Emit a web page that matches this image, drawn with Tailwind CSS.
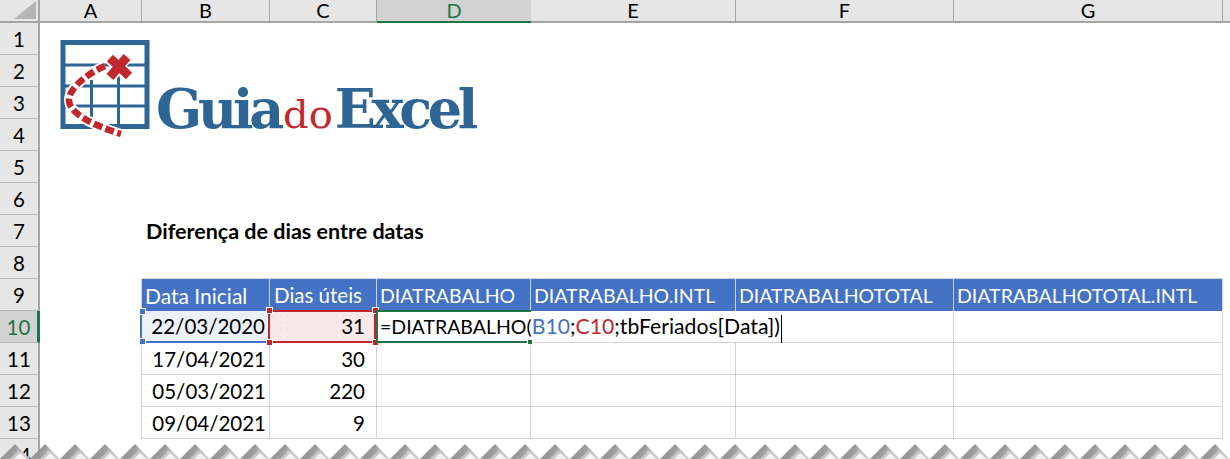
<!DOCTYPE html>
<html lang="pt">
<head>
  <meta charset="UTF-8">
  <meta name="viewport" content="width=device-width, initial-scale=1.0">
  <title>Guia do Excel</title>
  <script src="https://cdn.jsdelivr.net/npm/@tailwindcss/browser@4"></script>
</head>
<body class="bg-white h-[459px] overflow-hidden relative font-['Lato',sans-serif] text-[20.5px] text-black">

  <!-- Cabecalho das colunas -->
  <div class="flex h-[23px] text-center leading-[21px] text-[20px]">
    <div class="w-10 bg-[#e6e6e6] border-r-2 border-b-2 border-[#a6a6a6]">
      <svg class="w-[38px] h-[21px]" viewBox="0 0 38 21"><path d="M14 19 L36 1 L36 19 Z" fill="#b5b5b5"/></svg>
    </div>
    <div class="w-[102px] bg-[#e6e6e6] border-r border-b-2 border-[#a6a6a6]">A</div>
    <div class="w-[128px] bg-[#e6e6e6] border-r border-b-2 border-[#a6a6a6]">B</div>
    <div class="w-[107px] bg-[#e6e6e6] border-r border-b-2 border-[#a6a6a6]">C</div>
    <div class="w-[154px] bg-[#d2d2d2] border-b-2 border-[#217346] text-[#217346]">D</div>
    <div class="w-[205px] bg-[#e6e6e6] border-r border-b-2 border-[#a6a6a6]">E</div>
    <div class="w-[218px] bg-[#e6e6e6] border-r border-b-2 border-[#a6a6a6]">F</div>
    <div class="w-[269px] bg-[#e6e6e6] border-r border-b-2 border-[#a6a6a6]">G</div>
    <div class="flex-1 bg-[#e6e6e6] border-b-2 border-[#a6a6a6]"></div>
  </div>

  <!-- Linhas 1 a 8 -->
  <div class="flex h-8"><div class="w-10 h-8 leading-8 text-center bg-[#e6e6e6] border-r-2 border-b border-r-[#a6a6a6] border-b-[#b8b8b8]">1</div></div>
  <div class="flex h-8"><div class="w-10 h-8 leading-8 text-center bg-[#e6e6e6] border-r-2 border-b border-r-[#a6a6a6] border-b-[#b8b8b8]">2</div></div>
  <div class="flex h-8"><div class="w-10 h-8 leading-8 text-center bg-[#e6e6e6] border-r-2 border-b border-r-[#a6a6a6] border-b-[#b8b8b8]">3</div></div>
  <div class="flex h-8"><div class="w-10 h-8 leading-8 text-center bg-[#e6e6e6] border-r-2 border-b border-r-[#a6a6a6] border-b-[#b8b8b8]">4</div></div>
  <div class="flex h-8"><div class="w-10 h-8 leading-8 text-center bg-[#e6e6e6] border-r-2 border-b border-r-[#a6a6a6] border-b-[#b8b8b8]">5</div></div>
  <div class="flex h-8"><div class="w-10 h-8 leading-8 text-center bg-[#e6e6e6] border-r-2 border-b border-r-[#a6a6a6] border-b-[#b8b8b8]">6</div></div>
  <div class="flex h-8">
    <div class="w-10 h-8 leading-8 text-center bg-[#e6e6e6] border-r-2 border-b border-r-[#a6a6a6] border-b-[#b8b8b8]">7</div>
    <div class="ml-[106px] leading-8 font-bold text-[21.5px] whitespace-nowrap">Diferença de dias entre datas</div>
  </div>
  <div class="flex h-8"><div class="w-10 h-8 leading-8 text-center bg-[#e6e6e6] border-r-2 border-b border-r-[#a6a6a6] border-b-[#b8b8b8]">8</div></div>

  <!-- Linha 9: cabecalho da tabela -->
  <div class="flex h-8">
    <div class="w-10 h-8 leading-8 text-center bg-[#e6e6e6] border-r-2 border-b border-r-[#a6a6a6] border-b-[#b8b8b8]">9</div>
    <div class="w-[102px] -mt-px border-r border-[#d4d4d4]"></div>
    <div class="flex h-[33px] -mt-px bg-[#4472c4] text-white text-[19.5px] leading-[33px] border-t border-[#d4d4d4] whitespace-nowrap">
      <div class="w-[128px] pl-[3px] border-r border-white/70 text-[21px]">Data Inicial</div>
      <div class="w-[107px] pl-[4px] border-r border-white/70 text-[20.5px]">Dias úteis</div>
      <div class="w-[154px] pl-[3px] border-r border-white/70">DIATRABALHO</div>
      <div class="w-[205px] pl-[3px] border-r border-white/70">DIATRABALHO.INTL</div>
      <div class="w-[218px] pl-[3px] border-r border-white/70">DIATRABALHOTOTAL</div>
      <div class="w-[268px] pl-[3px]">DIATRABALHOTOTAL.INTL</div>
    </div>
    <div class="w-px h-[33px] -mt-px bg-[#d4d4d4]"></div>
  </div>

  <!-- Linha 10: celula em edicao -->
  <div class="flex h-8 relative">
    <div class="w-10 h-8 leading-8 text-center bg-[#d2d2d2] text-[#217346] border-r-[3px] border-b border-r-[#217346] border-b-[#b8b8b8]">10</div>
    <div class="w-[100px]"></div>
    <div class="w-[128px] relative bg-[#ecf0f9] border-b-2 border-l-2 border-[#4472c4] text-right pr-[3px] leading-[30px]">22/03/2020
      <span class="absolute left-[-3px] top-[-3px] w-[7px] h-[7px] bg-[#4472c4] border border-white"></span>
      <span class="absolute left-[-3px] bottom-[-4px] w-[7px] h-[7px] bg-[#4472c4] border border-white"></span>
    </div>
    <div class="w-[108px] h-[33px] -mt-px relative bg-[#f9e9e9] bg-[radial-gradient(#f2d4d4_0.7px,transparent_0.8px)] bg-[length:7px_7px] border-2 border-[#c0272d] text-right pr-[9px] leading-[29px]">31
      <span class="absolute left-[-4px] top-[-5px] w-[7px] h-[7px] bg-[#c0272d] border border-white"></span>
      <span class="absolute right-[-5px] top-[-5px] w-[7px] h-[7px] bg-[#c0272d] border border-white"></span>
      <span class="absolute left-[-4px] bottom-[-5px] w-[7px] h-[7px] bg-[#c0272d] border border-white"></span>
      <span class="absolute right-[-5px] bottom-[-5px] w-[7px] h-[7px] bg-[#c0272d] border border-white"></span>
    </div>
    <div class="w-[155px] h-[33px] -mt-px relative border-l-2 border-t-2 border-b-2 border-[#217346] pl-[2px] leading-[29px] whitespace-nowrap"><span class="text-[19.5px]">=DIATRABALHO(</span><span class="text-[#4472c4] text-[21.2px]">B10</span><span class="text-[21.2px]">;</span><span class="text-[#c0272d] text-[21.2px]">C10</span><span class="text-[21.2px]">;tbFeriados[Data])</span><span class="inline-block align-middle w-px h-7 bg-black ml-px"></span>
      <span class="absolute right-[-2px] bottom-[-4px] w-[6px] h-[6px] bg-[#217346] border border-white"></span>
    </div>
    <div class="w-[205px] border-b border-[#d4d4d4]"></div>
    <div class="w-[218px] border-r border-b border-[#d4d4d4]"></div>
    <div class="w-[269px] border-r border-b border-[#d4d4d4]"></div>
  </div>

  <!-- Linhas 11 a 13 -->
  <div class="flex h-8 leading-8">
    <div class="w-10 text-center bg-[#e6e6e6] border-r-2 border-b border-r-[#a6a6a6] border-b-[#b8b8b8]">11</div>
    <div class="w-[102px] border-r border-[#d4d4d4]"></div>
    <div class="w-[128px] border-r border-b border-[#d4d4d4] text-right pr-[3px]">17/04/2021</div>
    <div class="w-[107px] border-r border-b border-[#d4d4d4] text-right pr-[11px]">30</div>
    <div class="w-[154px] border-r border-b border-[#d4d4d4]"></div>
    <div class="w-[205px] border-r border-b border-[#d4d4d4]"></div>
    <div class="w-[218px] border-r border-b border-[#d4d4d4]"></div>
    <div class="w-[269px] border-r border-b border-[#d4d4d4]"></div>
  </div>
  <div class="flex h-8 leading-8">
    <div class="w-10 text-center bg-[#e6e6e6] border-r-2 border-b border-r-[#a6a6a6] border-b-[#b8b8b8]">12</div>
    <div class="w-[102px] border-r border-[#d4d4d4]"></div>
    <div class="w-[128px] border-r border-b border-[#d4d4d4] text-right pr-[3px]">05/03/2021</div>
    <div class="w-[107px] border-r border-b border-[#d4d4d4] text-right pr-[11px]">220</div>
    <div class="w-[154px] border-r border-b border-[#d4d4d4]"></div>
    <div class="w-[205px] border-r border-b border-[#d4d4d4]"></div>
    <div class="w-[218px] border-r border-b border-[#d4d4d4]"></div>
    <div class="w-[269px] border-r border-b border-[#d4d4d4]"></div>
  </div>
  <div class="flex h-8 leading-8">
    <div class="w-10 text-center bg-[#e6e6e6] border-r-2 border-b border-r-[#a6a6a6] border-b-[#b8b8b8]">13</div>
    <div class="w-[102px] border-r border-[#d4d4d4]"></div>
    <div class="w-[128px] border-r border-b border-[#d4d4d4] text-right pr-[3px]">09/04/2021</div>
    <div class="w-[107px] border-r border-b border-[#d4d4d4] text-right pr-[11px]">9</div>
    <div class="w-[154px] border-r border-b border-[#d4d4d4]"></div>
    <div class="w-[205px] border-r border-b border-[#d4d4d4]"></div>
    <div class="w-[218px] border-r border-b border-[#d4d4d4]"></div>
    <div class="w-[269px] border-r border-b border-[#d4d4d4]"></div>
  </div>
  <div class="flex h-8 leading-8">
    <div class="w-10 text-center bg-[#e6e6e6] border-r-2 border-r-[#a6a6a6]">14</div>
  </div>

  <!-- Logo -->
  <div class="absolute left-[50px] top-[30px] flex items-start">
    <svg class="w-[110px] h-[115px]" viewBox="0 0 110 115" fill="none">
      <rect x="13" y="12.5" width="84" height="84" stroke="#2f6595" stroke-width="5"/>
      <path d="M13 35H97M13 56H97M13 76H97" stroke="#2f6595" stroke-width="3"/>
      <path d="M41.5 50V96M68.5 36V96" stroke="#2f6595" stroke-width="3"/>
      <path d="M55 36C40 42 18 58 19 71C20 84 45 96 71 104" stroke="#fff" stroke-width="10"/>
      <path d="M59 27L78 46M76 27L60 47" stroke="#fff" stroke-width="13"/>
      <path d="M55 36C40 42 18 58 19 71C20 84 45 96 71 104" stroke="#c1272d" stroke-width="6.5" stroke-dasharray="9 3.5"/>
      <path d="M60 28L79 46M77 27L60 47" stroke="#c1272d" stroke-width="9"/>
    </svg>
  </div>
  <div class="absolute left-[156px] top-[74px] h-[70px] flex items-baseline whitespace-nowrap font-['DejaVu_Serif',serif] font-bold text-[#2f6595] leading-[70px] text-[54px]">
    <span class="tracking-[-4.2px]">Guia</span><span class="text-[#c1272d] font-normal text-[40px] ml-[3px] mr-[2px]">do</span><span class="tracking-[-4.4px]">Excel</span>
  </div>

  <!-- Borda rasgada -->
  <svg class="absolute left-0 top-[444px] w-[1230px] h-[15px]" viewBox="0 0 1230 15">
    <defs>
      <linearGradient id="dente" x1="0" y1="0" x2="1" y2="0.3">
        <stop offset="0" stop-color="#8a8a8a"/>
        <stop offset="0.55" stop-color="#9c9c9c"/>
        <stop offset="1" stop-color="#dcdcdc"/>
      </linearGradient>
      <pattern id="rasgo" x="0" y="0" width="30" height="15" patternUnits="userSpaceOnUse">
        <polygon points="0,15 15,0 30,15" fill="url(#dente)"/>
        <polygon points="10,15 19,6 29,15" fill="#c8c8c8"/>
        <polygon points="14,15 20,9 27,15" fill="#f3f3f3"/>
      </pattern>
    </defs>
    <rect width="1230" height="15" fill="url(#rasgo)"/>
  </svg>

</body>
</html>
